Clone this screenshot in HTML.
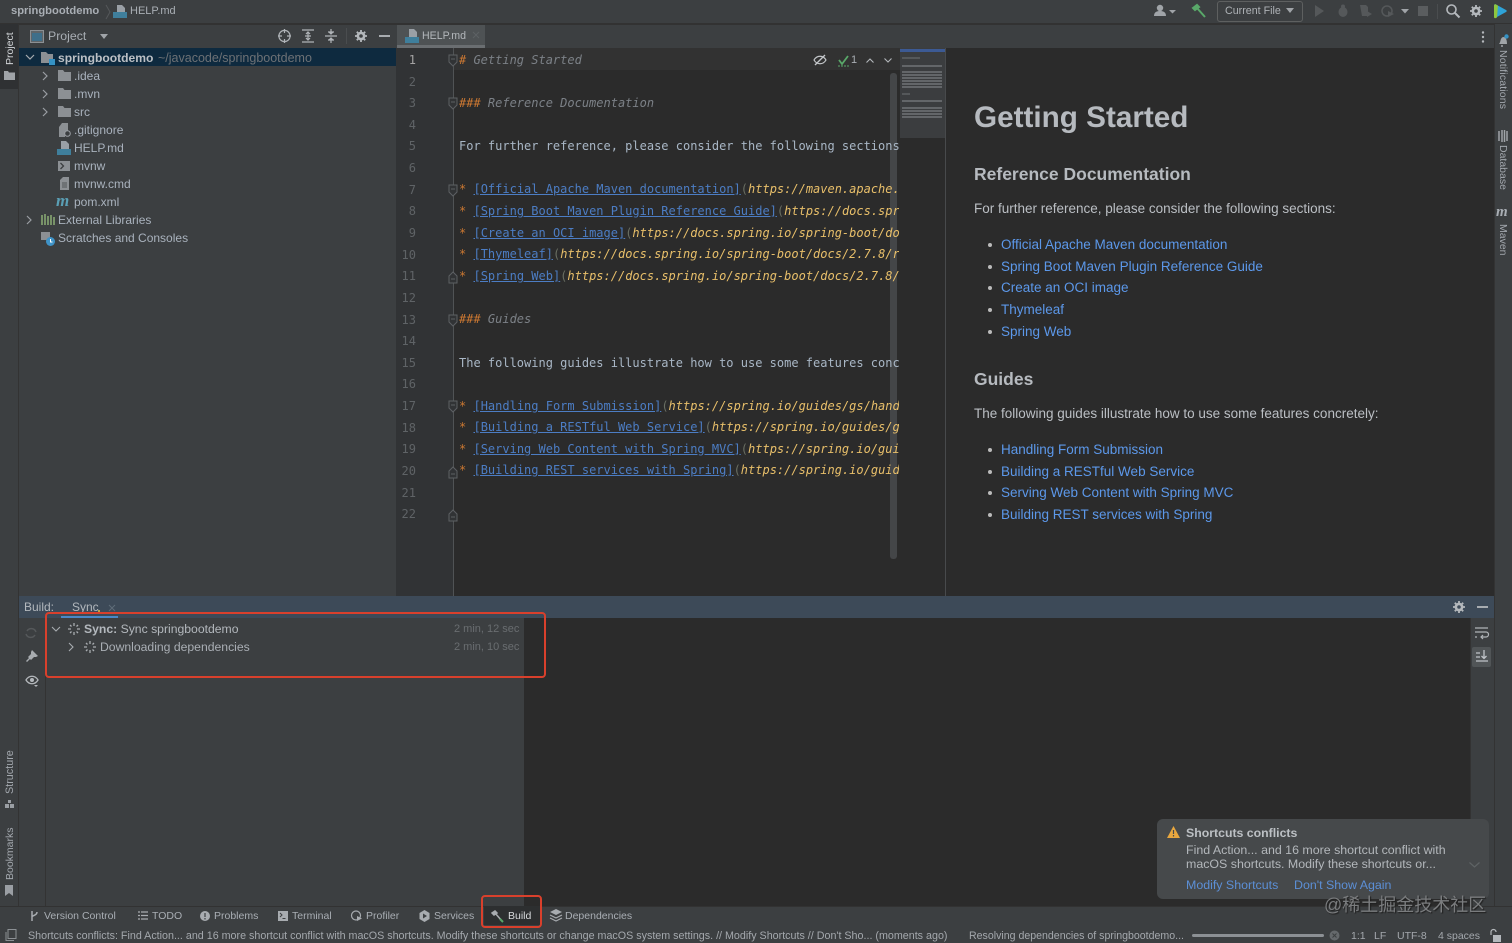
<!DOCTYPE html>
<html><head><meta charset="utf-8"><title>HELP.md</title>
<style>
html,body{margin:0;padding:0;background:#3c3f41}
#r{position:relative;width:1512px;height:943px;overflow:hidden;background:#3c3f41;font-family:"Liberation Sans","Noto Sans CJK SC",sans-serif;color:#a9b2bd;font-size:12px;filter:blur(.35px)}
.a,.t,.m,.p,.n{position:absolute;white-space:nowrap}
.t{line-height:16px}
.m{font-family:"DejaVu Sans Mono","Liberation Mono",monospace;font-size:12px;line-height:16px;color:#a9b7c6;left:459px}
.n{font-family:"DejaVu Sans Mono","Liberation Mono",monospace;font-size:12px;line-height:16px;color:#5f6366;left:398px;width:18px;text-align:right}
.h{color:#cc7832;font-style:italic}.g{color:#7c8187;font-style:italic}.o{color:#cc7832}
.l{color:#4c7dc4;text-decoration:underline}.u{color:#e8bf6a;font-style:italic}.b{color:#6a6f63}
.p{font-size:13.5px;line-height:18px;color:#bbbfc4}
.lk{color:#5c98ea}
.d{width:4px;height:4px;border-radius:50%;background:#bbb;position:absolute;left:988px}
.v{position:absolute;transform-origin:0 0;transform:rotate(-90deg);white-space:nowrap;font-size:10.5px;line-height:14px;color:#a3a8ae}
.v2{position:absolute;transform-origin:0 0;transform:rotate(90deg);white-space:nowrap;font-size:10.5px;line-height:14px;color:#a3a8ae}
svg{position:absolute;overflow:visible}
.mini{position:absolute;left:902px;height:2px;background:#636669}
.tr{font-size:12px}
</style></head><body><div id="r">

<!-- top bar -->
<div class="a" style="left:0;top:0;width:1512px;height:23px;background:#3c3f41;border-bottom:1px solid #323232"></div>
<div class="t" style="left:11px;top:3px;font-weight:bold;font-size:11.2px;color:#a9aeb4">springbootdemo</div>
<svg style="left:105px;top:4px" width="6" height="16"><path d="M1 1l4 7-4 7" fill="none" stroke="#55585a"/></svg>
<svg style="left:113px;top:4px" width="14" height="14"><path d="M4 1h5l3 3v4H4z" fill="#9aa0a6"/><rect x="0" y="8" width="14" height="6" fill="#3f7f9c"/></svg>
<div class="t" style="left:130px;top:3px;font-size:11px;color:#a9aeb4">HELP.md</div>

<svg style="left:1154px;top:4px" width="24" height="14"><circle cx="6" cy="4" r="3.200" fill="#a0a4a8"/><path d="M0 12c0-4 3-5 6-5s6 1 6 5z" fill="#a0a4a8"/><path d="M15 6h7l-3.500 3.500z" fill="#a0a4a8"/></svg>
<svg style="left:1191px;top:3px" width="16" height="16"><path d="M2 5l4-3 2 2-4 3zM6 5l8 9" fill="#59a869" stroke="#59a869" stroke-width="2"/></svg>
<div class="a" style="left:1217px;top:1px;width:84px;height:19px;border:1px solid #5e6060;border-radius:3px"></div>
<div class="t" style="left:1225px;top:3px;font-size:10.7px;color:#aeb2b6">Current File</div>
<svg style="left:1286px;top:8px" width="9" height="6"><path d="M0 0h8l-4 5z" fill="#a0a4a8"/></svg>
<svg style="left:1315px;top:5px" width="10" height="12"><path d="M0 0l9 6-9 6z" fill="#55585a"/></svg>
<svg style="left:1337px;top:4px" width="12" height="14"><ellipse cx="6" cy="8" rx="4.500" ry="5" fill="#55585a"/><circle cx="6" cy="2.500" r="2" fill="#55585a"/></svg>
<svg style="left:1360px;top:4px" width="13" height="14"><path d="M0 1h6l2 2v9H2z" fill="#55585a"/><path d="M7 7l5 3-5 3z" fill="#55585a"/></svg>
<svg style="left:1381px;top:4px" width="14" height="14"><circle cx="6" cy="7" r="5" fill="none" stroke="#55585a" stroke-width="1.500"/><path d="M7 7l6 3-6 3z" fill="#55585a"/></svg>
<svg style="left:1401px;top:9px" width="8" height="5"><path d="M0 0h8l-4 4.500z" fill="#a0a4a8"/></svg>
<div class="a" style="left:1418px;top:6px;width:10px;height:10px;background:#5a5d5f"></div>
<div class="a" style="left:1437px;top:4px;width:1px;height:15px;background:#4a4d4f"></div>
<svg style="left:1446px;top:4px" width="14" height="14"><circle cx="5.500" cy="5.500" r="4.500" fill="none" stroke="#b4b8bc" stroke-width="1.600"/><path d="M9 9l4.500 4.500" stroke="#b4b8bc" stroke-width="2"/></svg>
<svg style="left:1470px;top:5px" width="12" height="12" viewBox="0 0 12 12"><circle cx="6" cy="6" r="3.300" fill="none" stroke="#b4b8bc" stroke-width="2.200"/><path d="M6 0v12M0 6h12M1.800 1.800l8.400 8.400M10.200 1.800l-8.400 8.400" stroke="#b4b8bc" stroke-width="1.800"/><circle cx="6" cy="6" r="1.800" fill="#3c3f41"/></svg>
<svg style="left:1493px;top:4px" width="14" height="14"><path d="M1 1.500c0-1 1-1.500 2-1l10 5.500c1 .6 1 1.400 0 2l-10 5.500c-1 .5-2 0-2-1z" fill="#2ea3d8"/><path d="M1 1.500c0-1 1-1.500 2-1l2 1.100-1 11.800-1 .6c-1 .5-2 0-2-1z" fill="#8ec63f"/></svg>

<!-- left stripe -->
<div class="a" style="left:0;top:24px;width:18px;height:882px;background:#3c3f41;border-right:1px solid #333"></div>
<div class="a" style="left:0;top:24px;width:18px;height:65px;background:#2f3133"></div>
<div class="v" style="left:3px;top:65px;color:#d2d5d8">Project</div>
<svg style="left:4px;top:71px" width="11" height="9"><path d="M0 0h4l1 1.500h6V9H0z" fill="#a0a4a8"/></svg>
<div class="v" style="left:3px;top:794px;font-size:10.8px">Structure</div>
<svg style="left:5px;top:800px" width="9" height="8"><path d="M3 0h3v3H3zM0 4h4v4H0zM5 4h4v4H5z" fill="#9a9ea3"/></svg>
<div class="v" style="left:3px;top:880px">Bookmarks</div>
<svg style="left:5px;top:885px" width="8" height="11"><path d="M0 0h8v11l-4-3-4 3z" fill="#9a9ea3"/></svg>

<!-- project panel -->
<div class="a" style="left:19px;top:24px;width:377px;height:24px;background:#3c3f41;border-top:1px solid #323232;box-sizing:border-box"></div>
<svg style="left:30px;top:30px" width="14" height="13"><rect x=".5" y=".5" width="13" height="12" fill="#5f6569" stroke="#8c9094"/><rect x="2" y="3" width="10" height="8" fill="#3f6f8a"/></svg>
<div class="t" style="left:48px;top:28px;font-size:12.3px;color:#a9aeb4">Project</div>
<svg style="left:100px;top:34px" width="9" height="6"><path d="M0 0h8l-4 5z" fill="#a0a4a8"/></svg>
<svg style="left:278px;top:29px" width="14" height="14"><circle cx="6.500" cy="7" r="5.600" fill="none" stroke="#b0b4b8" stroke-width="1.200"/><path d="M6.500 0v4M6.500 10v4M0 7h4M9 7h4" stroke="#b0b4b8" stroke-width="1.200"/></svg>
<svg style="left:302px;top:29px" width="12" height="14"><path d="M0 1h12M0 13h12M3 7h6M6 3v8M4 5l2-2 2 2M4 9l2 2 2-2" fill="none" stroke="#b0b4b8" stroke-width="1.200"/></svg>
<svg style="left:325px;top:29px" width="12" height="14"><path d="M0 7h12M3 3h6M3 11h6M6 0v5M6 9v5M4 3l2 2 2-2M4 11l2-2 2 2" fill="none" stroke="#b0b4b8" stroke-width="1.200"/></svg>
<div class="a" style="left:346px;top:28px;width:1px;height:16px;background:#4a4d4f"></div>
<svg style="left:355px;top:30px" width="12" height="12" viewBox="0 0 12 12"><circle cx="6" cy="6" r="3.300" fill="none" stroke="#b4b8bc" stroke-width="2.200"/><path d="M6 0v12M0 6h12M1.800 1.800l8.400 8.400M10.200 1.800l-8.400 8.400" stroke="#b4b8bc" stroke-width="1.800"/><circle cx="6" cy="6" r="1.800" fill="#3c3f41"/></svg>
<div class="a" style="left:379px;top:35px;width:11px;height:2px;background:#a8acb0"></div>

<div class="a" style="left:19px;top:48px;width:377px;height:18px;background:#0e2a3f"></div>
<svg style="left:25px;top:54px" width="10" height="7"><path d="M1 1l4 4 4-4" fill="none" stroke="#a8acb0" stroke-width="1.200"/></svg>
<svg style="left:41px;top:51px" width="14" height="14"><path d="M0 1h5l2 2h5v9H0z" fill="#8c9094"/><rect x="8" y="8" width="6" height="6" fill="#3592c4"/></svg>
<div class="t" style="left:58px;top:50px;font-size:12.1px;color:#bcc0c5;font-weight:bold">springbootdemo</div>
<div class="t" style="left:158px;top:50px;font-size:12.5px;color:#6d7175">~/javacode/springbootdemo</div>

<svg style="left:42px;top:71px" width="6" height="10"><path d="M1 1l4 4-4 4" fill="none" stroke="#9a9ea3" stroke-width="1.200"/></svg>
<svg style="left:58px;top:70px" width="13" height="11"><path d="M0 0h5l1.500 2H13v9H0z" fill="#8c9094"/></svg>
<div class="t tr" style="left:74px;top:68px">.idea</div>
<svg style="left:42px;top:89px" width="6" height="10"><path d="M1 1l4 4-4 4" fill="none" stroke="#9a9ea3" stroke-width="1.200"/></svg>
<svg style="left:58px;top:88px" width="13" height="11"><path d="M0 0h5l1.500 2H13v9H0z" fill="#8c9094"/></svg>
<div class="t tr" style="left:74px;top:86px">.mvn</div>
<svg style="left:42px;top:107px" width="6" height="10"><path d="M1 1l4 4-4 4" fill="none" stroke="#9a9ea3" stroke-width="1.200"/></svg>
<svg style="left:58px;top:106px" width="13" height="11"><path d="M0 0h5l1.500 2H13v9H0z" fill="#8c9094"/></svg>
<div class="t tr" style="left:74px;top:104px">src</div>
<svg style="left:59px;top:123px" width="12" height="14"><path d="M3 0h6v8H6v6H0V4z" fill="#8c9094"/><circle cx="8.500" cy="10.500" r="2.800" fill="none" stroke="#9a9ea3"/></svg>
<div class="t tr" style="left:74px;top:122px">.gitignore</div>
<svg style="left:57px;top:141px" width="14" height="14"><path d="M4 0h5l3 3v5H4z" fill="#9aa0a6"/><rect x="0" y="8" width="14" height="6" fill="#3f7f9c"/></svg>
<div class="t tr" style="left:74px;top:140px">HELP.md</div>
<svg style="left:58px;top:161px" width="12" height="10"><rect width="12" height="10" fill="#8c9094"/><path d="M2.500 2l3 3-3 3" fill="none" stroke="#3c3f41" stroke-width="1.300"/></svg>
<div class="t tr" style="left:74px;top:158px">mvnw</div>
<svg style="left:60px;top:177px" width="9" height="13"><path d="M3 0h6v13H0V3z" fill="#8c9094"/><path d="M2 6h5M2 8h5M2 10h5" stroke="#3c3f41" stroke-width=".8"/></svg>
<div class="t tr" style="left:74px;top:176px">mvnw.cmd</div>
<div class="t" style="left:56px;top:193px;font-size:17px;font-weight:bold;font-style:italic;color:#5a9fb5;font-family:'Liberation Serif',serif">m</div>
<div class="t tr" style="left:74px;top:194px">pom.xml</div>
<svg style="left:26px;top:215px" width="6" height="10"><path d="M1 1l4 4-4 4" fill="none" stroke="#9a9ea3" stroke-width="1.200"/></svg>
<svg style="left:41px;top:214px" width="14" height="11"><path d="M1 1v10M4 0v11M7 2v9M10 1v10M13 3v8" stroke="#7f9b6d" stroke-width="1.800"/></svg>
<div class="t tr" style="left:58px;top:212px">External Libraries</div>
<svg style="left:41px;top:232px" width="14" height="14"><rect width="9" height="8" fill="#8c9094"/><circle cx="9.500" cy="9.500" r="4.500" fill="#3f93c7"/><path d="M9.500 7v3h2" stroke="#fff" fill="none"/></svg>
<div class="t tr" style="left:58px;top:230px">Scratches and Consoles</div>

<!-- tabs -->
<div class="a" style="left:396px;top:24px;width:1098px;height:24px;background:#3c3f41;border-top:1px solid #323232;box-sizing:border-box"></div>
<div class="a" style="left:397px;top:25px;width:88px;height:20px;background:#4e5254"></div>
<div class="a" style="left:397px;top:45px;width:88px;height:3px;background:#6a6e71"></div>
<svg style="left:405px;top:29px" width="14" height="14"><path d="M4 0h5l3 3v5H4z" fill="#9aa0a6"/><rect x="0" y="8" width="14" height="6" fill="#3f7f9c"/></svg>
<div class="t" style="left:422px;top:28px;font-size:10.6px;color:#b3b7bb">HELP.md</div>
<svg style="left:472px;top:31px" width="8" height="8"><path d="M1 1l6 6M7 1l-6 6" stroke="#5d6164" stroke-width="1"/></svg>
<svg style="left:1481px;top:31px" width="4" height="12"><circle cx="2" cy="1.500" r="1.200" fill="#b4b8bc"/><circle cx="2" cy="6" r="1.200" fill="#b4b8bc"/><circle cx="2" cy="10.500" r="1.200" fill="#b4b8bc"/></svg>

<!-- editor -->
<div class="a" style="left:396px;top:48px;width:549px;height:548px;background:#2b2b2b"></div>
<div class="a" style="left:396px;top:48px;width:57px;height:548px;background:#313335;border-right:1px solid #505355"></div>
<div class="a" style="left:454px;top:48px;width:446px;height:22px;background:#323232"></div>
<div class="a" style="left:890px;top:73px;width:7px;height:486px;background:#444648;border-radius:3px"></div>

<div class="n" style="top:52px;color:#a4a3a3">1</div><div class="n" style="top:74px">2</div><div class="n" style="top:95px">3</div><div class="n" style="top:117px">4</div><div class="n" style="top:138px">5</div><div class="n" style="top:160px">6</div><div class="n" style="top:182px">7</div><div class="n" style="top:203px">8</div><div class="n" style="top:225px">9</div><div class="n" style="top:247px">10</div><div class="n" style="top:268px">11</div><div class="n" style="top:290px">12</div><div class="n" style="top:312px">13</div><div class="n" style="top:333px">14</div><div class="n" style="top:355px">15</div><div class="n" style="top:376px">16</div><div class="n" style="top:398px">17</div><div class="n" style="top:420px">18</div><div class="n" style="top:441px">19</div><div class="n" style="top:463px">20</div><div class="n" style="top:485px">21</div><div class="n" style="top:506px">22</div>

<svg style="left:448px;top:48px" width="10" height="480" fill="#313335" stroke="#5d6063">
<path d="M1 7h8v7l-4 4-4-4zM3 11h4"/><path d="M1 50h8v7l-4 4-4-4zM3 54h4"/><path d="M1 137h8v7l-4 4-4-4zM3 141h4"/><path d="M1 228l4-4 4 4v7H1zM3 231h4"/><path d="M1 267h8v7l-4 4-4-4zM3 271h4"/><path d="M1 353h8v7l-4 4-4-4zM3 357h4"/><path d="M1 423l4-4 4 4v7H1zM3 426h4"/><path d="M1 466l4-4 4 4v7H1zM3 469h4"/></svg>

<div class="a" style="left:459px;top:48px;width:440px;height:548px;overflow:hidden">
<div class="m" style="left:0;top:4px"><span class="h"># </span><span class="g">Getting Started</span></div>
<div class="m" style="left:0;top:47px"><span class="h">### </span><span class="g">Reference Documentation</span></div>
<div class="m" style="left:0;top:90px">For further reference, please consider the following sections:</div>
<div class="m" style="left:0;top:133px"><span class="o">*</span> <span class="l">[Official Apache Maven documentation]</span><span class="b">(</span><span class="u">https://maven.apache.org/guides/index.html</span></div>
<div class="m" style="left:0;top:155px"><span class="o">*</span> <span class="l">[Spring Boot Maven Plugin Reference Guide]</span><span class="b">(</span><span class="u">https://docs.spring.io/spring-boot</span></div>
<div class="m" style="left:0;top:177px"><span class="o">*</span> <span class="l">[Create an OCI image]</span><span class="b">(</span><span class="u">https://docs.spring.io/spring-boot/docs/2.7.8</span></div>
<div class="m" style="left:0;top:198px"><span class="o">*</span> <span class="l">[Thymeleaf]</span><span class="b">(</span><span class="u">https://docs.spring.io/spring-boot/docs/2.7.8/reference</span></div>
<div class="m" style="left:0;top:220px"><span class="o">*</span> <span class="l">[Spring Web]</span><span class="b">(</span><span class="u">https://docs.spring.io/spring-boot/docs/2.7.8/reference</span></div>
<div class="m" style="left:0;top:263px"><span class="h">### </span><span class="g">Guides</span></div>
<div class="m" style="left:0;top:307px">The following guides illustrate how to use some features concretely:</div>
<div class="m" style="left:0;top:350px"><span class="o">*</span> <span class="l">[Handling Form Submission]</span><span class="b">(</span><span class="u">https://spring.io/guides/gs/handling-form</span></div>
<div class="m" style="left:0;top:371px"><span class="o">*</span> <span class="l">[Building a RESTful Web Service]</span><span class="b">(</span><span class="u">https://spring.io/guides/gs/rest</span></div>
<div class="m" style="left:0;top:393px"><span class="o">*</span> <span class="l">[Serving Web Content with Spring MVC]</span><span class="b">(</span><span class="u">https://spring.io/guides/gs</span></div>
<div class="m" style="left:0;top:414px"><span class="o">*</span> <span class="l">[Building REST services with Spring]</span><span class="b">(</span><span class="u">https://spring.io/guides/tut</span></div>
</div>

<svg style="left:813px;top:54px" width="14" height="12"><path d="M1 6c3-5 9-5 12 0-3 5-9 5-12 0z" fill="none" stroke="#c4c7ca" stroke-width="1.200"/><path d="M2 11L12 1" stroke="#c4c7ca" stroke-width="1.300"/></svg>
<svg style="left:838px;top:55px" width="12" height="12"><path d="M1 5l3 4 6-8" fill="none" stroke="#59a869" stroke-width="1.800"/><path d="M0 11h11" stroke="#59a869" stroke-dasharray="2 1"/></svg>
<div class="t" style="left:851px;top:52px;font-size:11px;color:#a9aeb4">1</div>
<svg style="left:866px;top:58px" width="8" height="5"><path d="M.5 4.500L4 1l3.500 3.500" fill="none" stroke="#b4b8bc" stroke-width="1.100"/></svg>
<svg style="left:884px;top:58px" width="8" height="5"><path d="M.5.500L4 4 7.500.500" fill="none" stroke="#b4b8bc" stroke-width="1.100"/></svg>

<!-- minimap -->
<div class="a" style="left:900px;top:48px;width:45px;height:90px;background:#3b3d3f"></div>
<div class="a" style="left:900px;top:49px;width:45px;height:3px;background:#3c5a94"></div>
<div class="mini" style="top:57px;width:18px;background:#55585a"></div>
<div class="mini" style="top:65px;width:40px"></div>
<div class="mini" style="top:71px;width:40px"></div><div class="mini" style="top:74px;width:40px"></div><div class="mini" style="top:77px;width:40px"></div><div class="mini" style="top:80px;width:40px"></div><div class="mini" style="top:83px;width:40px"></div><div class="mini" style="top:86px;width:40px"></div>
<div class="mini" style="top:93px;width:8px;background:#55585a"></div>
<div class="mini" style="top:100px;width:40px"></div>
<div class="mini" style="top:107px;width:40px"></div><div class="mini" style="top:110px;width:40px"></div><div class="mini" style="top:113px;width:40px"></div><div class="mini" style="top:116px;width:40px"></div>
<div class="a" style="left:945px;top:48px;width:1px;height:548px;background:#484a4c"></div>

<!-- preview -->
<div class="a" style="left:946px;top:48px;width:548px;height:548px;background:#2b2b2b"></div>
<div class="p" style="left:974px;top:100px;font-size:29.7px;line-height:36px;font-weight:bold;color:#b6babf">Getting Started</div>
<div class="p" style="left:974px;top:163px;font-size:17.5px;line-height:22px;font-weight:bold;color:#b6babf">Reference Documentation</div>
<div class="p" style="left:974px;top:200px">For further reference, please consider the following sections:</div>
<div class="d" style="top:243px"></div><div class="p lk" style="left:1001px;top:236px">Official Apache Maven documentation</div>
<div class="d" style="top:265px"></div><div class="p lk" style="left:1001px;top:258px">Spring Boot Maven Plugin Reference Guide</div>
<div class="d" style="top:286px"></div><div class="p lk" style="left:1001px;top:279px">Create an OCI image</div>
<div class="d" style="top:308px"></div><div class="p lk" style="left:1001px;top:301px">Thymeleaf</div>
<div class="d" style="top:330px"></div><div class="p lk" style="left:1001px;top:323px">Spring Web</div>
<div class="p" style="left:974px;top:368px;font-size:17.5px;line-height:22px;font-weight:bold;color:#b6babf">Guides</div>
<div class="p" style="left:974px;top:405px">The following guides illustrate how to use some features concretely:</div>
<div class="d" style="top:448px"></div><div class="p lk" style="left:1001px;top:441px">Handling Form Submission</div>
<div class="d" style="top:470px"></div><div class="p lk" style="left:1001px;top:463px">Building a RESTful Web Service</div>
<div class="d" style="top:491px"></div><div class="p lk" style="left:1001px;top:484px">Serving Web Content with Spring MVC</div>
<div class="d" style="top:513px"></div><div class="p lk" style="left:1001px;top:506px">Building REST services with Spring</div>

<!-- right stripe -->
<div class="a" style="left:1494px;top:24px;width:18px;height:882px;background:#3c3f41;border-left:1px solid #333;box-sizing:border-box"></div>
<svg style="left:1498px;top:34px" width="12" height="13"><path d="M1 10c2-2 1-6 4-7 3 0 4 3 4 7z" fill="#a0a4a8"/><circle cx="8.500" cy="2.500" r="2.200" fill="#3592c4"/><circle cx="4" cy="12" r="1" fill="#a0a4a8"/></svg>
<div class="v2" style="left:1510px;top:50px;letter-spacing:.15px">Notifications</div>
<svg style="left:1498px;top:130px" width="10" height="12"><path d="M1 1v10M4 0v12M6.500 0v12M9 1v10" stroke="#a0a4a8" stroke-width="1.500"/></svg>
<div class="v2" style="left:1510px;top:145px">Database</div>
<div class="t" style="left:1496px;top:204px;font-size:15px;font-weight:bold;font-style:italic;color:#a9aeb4;font-family:'Liberation Serif',serif">m</div>
<div class="v2" style="left:1510px;top:224px">Maven</div>

<!-- build panel -->
<div class="a" style="left:19px;top:596px;width:1475px;height:22px;background:#3d4a58"></div>
<div class="t" style="left:24px;top:599px;font-size:12px;color:#b3b8bd">Build:</div>
<div class="t" style="left:72px;top:599px;font-size:12px;color:#b3b8bd">Sync</div>
<div class="a" style="left:98px;top:610px;width:2px;height:2px;background:#b9a64b"></div>
<svg style="left:108px;top:604px" width="8" height="8"><path d="M1 1l6 6M7 1l-6 6" stroke="#5f6c78"/></svg>
<div class="a" style="left:61px;top:616px;width:57px;height:3px;background:#4a88c7"></div>
<svg style="left:1453px;top:601px" width="12" height="12" viewBox="0 0 12 12"><circle cx="6" cy="6" r="3.300" fill="none" stroke="#b4b8bc" stroke-width="2.200"/><path d="M6 0v12M0 6h12M1.800 1.800l8.400 8.400M10.200 1.800l-8.400 8.400" stroke="#b4b8bc" stroke-width="1.800"/><circle cx="6" cy="6" r="1.800" fill="#3d4a58"/></svg>
<div class="a" style="left:1477px;top:606px;width:11px;height:2px;background:#a8acb0"></div>

<div class="a" style="left:19px;top:618px;width:26px;height:288px;background:#3c3f41;border-right:1px solid #333"></div>
<div class="a" style="left:46px;top:618px;width:478px;height:288px;background:#3c3f41"></div>
<div class="a" style="left:524px;top:618px;width:946px;height:288px;background:#2b2b2b"></div>
<div class="a" style="left:1470px;top:618px;width:24px;height:288px;background:#3c3f41;border-left:1px solid #333;box-sizing:border-box"></div>

<svg style="left:25px;top:627px" width="12" height="12"><path d="M2 4a5 5 0 0 1 9 1M10 8a5 5 0 0 1-9-1" fill="none" stroke="#55585a" stroke-width="1.500"/></svg>
<svg style="left:25px;top:650px" width="13" height="13"><path d="M7 0l6 6-2 1-2 0-3 3-1-1-3 3-1-1 3-3-1-1 3-3 0-2z" fill="#a8acb0"/></svg>
<svg style="left:25px;top:675px" width="14" height="12"><path d="M1 5c3-5 9-5 12 0-3 5-9 5-12 0z" fill="none" stroke="#b4b8bc" stroke-width="1.300"/><circle cx="7" cy="5" r="2" fill="#b4b8bc"/><path d="M9 10h4l-2 2z" fill="#b4b8bc"/></svg>

<svg style="left:51px;top:626px" width="10" height="7"><path d="M1 1l4 4 4-4" fill="none" stroke="#a8acb0" stroke-width="1.100"/></svg>
<svg style="left:68px;top:623px" width="12" height="12" stroke="#a8acb0" stroke-width="1.300"><path d="M6 0v3M10 2L8.500 3.500M12 6H9M10 10L8.500 8.500M6 12V9M2 10l1.500-1.500M0 6h3M2 2l1.500 1.500"/></svg>
<div class="t" style="left:84px;top:621px;font-size:12.2px;color:#b3b8bd"><b>Sync:</b> Sync springbootdemo</div>
<div class="t" style="left:454px;top:621px;font-size:11px;color:#696d70">2 min, 12 sec</div>
<svg style="left:68px;top:642px" width="6" height="10"><path d="M1 1l4 4-4 4" fill="none" stroke="#a8acb0" stroke-width="1.100"/></svg>
<svg style="left:84px;top:641px" width="12" height="12" stroke="#a8acb0" stroke-width="1.300"><path d="M6 0v3M10 2L8.500 3.500M12 6H9M10 10L8.500 8.500M6 12V9M2 10l1.500-1.500M0 6h3M2 2l1.500 1.500"/></svg>
<div class="t" style="left:100px;top:639px;font-size:12.2px;color:#a9aeb4">Downloading dependencies</div>
<div class="t" style="left:454px;top:639px;font-size:11px;color:#696d70">2 min, 10 sec</div>

<svg style="left:1475px;top:627px" width="13" height="13"><path d="M0 1h13M0 5h11a2.500 2.500 0 0 1 0 5H6M0 10h2M8 8l-2 2 2 2" fill="none" stroke="#b0b4b8" stroke-width="1.200"/></svg>
<div class="a" style="left:1472px;top:647px;width:19px;height:20px;background:#515557;border-radius:2px"></div>
<svg style="left:1476px;top:650px" width="12" height="13"><path d="M0 3h4M0 7h4M0 11h12M8 0v8M5.500 6L8 8.500 10.500 6" fill="none" stroke="#c0c4c8" stroke-width="1.300"/></svg>

<!-- red box -->
<div class="a" style="left:45px;top:612px;width:501px;height:66px;box-sizing:border-box;border:2px solid #d9402c;border-radius:4px"></div>

<!-- notification -->
<div class="a" style="left:1157px;top:819px;width:332px;height:80px;background:#46494b;border-radius:6px"></div>
<svg style="left:1167px;top:826px" width="13" height="12"><path d="M6.500 0l6.500 12H0z" fill="#e8a73f"/><path d="M6.500 4v4M6.500 9v1.500" stroke="#46494b" stroke-width="1.200"/></svg>
<div class="t" style="left:1186px;top:825px;font-size:12.3px;font-weight:bold;color:#bcc0c4">Shortcuts conflicts</div>
<div class="t" style="left:1186px;top:842px;font-size:12.4px;color:#b3b7bb">Find Action... and 16 more shortcut conflict with</div>
<div class="t" style="left:1186px;top:856px;font-size:12.4px;color:#b3b7bb">macOS shortcuts. Modify these shortcuts or...</div>
<svg style="left:1469px;top:862px" width="11" height="6"><path d="M.5.500l5 4.500 5-4.500" fill="none" stroke="#5f6365" stroke-width="1.200"/></svg>
<div class="t" style="left:1186px;top:877px;font-size:12.4px;color:#5c8fd6">Modify Shortcuts</div>
<div class="t" style="left:1294px;top:877px;font-size:12.4px;color:#5c8fd6">Don't Show Again</div>

<!-- tool strip -->
<div class="a" style="left:0;top:906px;width:1512px;height:20px;background:#3c3f41;border-top:1px solid #323232;box-sizing:border-box"></div>
<svg style="left:30px;top:910px" width="9" height="12"><path d="M2 1v10M2 7c0-2 5-1 5-5" fill="none" stroke="#a8acb0" stroke-width="1.500"/></svg>
<div class="t" style="left:44px;top:908px;font-size:10.5px;color:#a9aeb4">Version Control</div>
<svg style="left:138px;top:911px" width="10" height="9"><path d="M0 1h2M3 1h7M0 4.500h2M3 4.500h7M0 8h2M3 8h7" stroke="#a8acb0" stroke-width="1.200"/></svg>
<div class="t" style="left:152px;top:908px;font-size:10.5px;color:#a9aeb4">TODO</div>
<svg style="left:200px;top:911px" width="10" height="10"><circle cx="5" cy="5" r="5" fill="#a8acb0"/><path d="M5 2v4M5 7v1.500" stroke="#3c3f41" stroke-width="1.200"/></svg>
<div class="t" style="left:214px;top:908px;font-size:10.5px;color:#a9aeb4">Problems</div>
<svg style="left:278px;top:911px" width="10" height="10"><rect width="10" height="10" fill="#a8acb0"/><path d="M2 2l2 2-2 2M4.500 7.500h3" fill="none" stroke="#3c3f41"/></svg>
<div class="t" style="left:292px;top:908px;font-size:10.5px;color:#a9aeb4">Terminal</div>
<svg style="left:351px;top:910px" width="12" height="12"><circle cx="5" cy="5.500" r="4.500" fill="none" stroke="#a8acb0" stroke-width="1.200"/><path d="M6 6l5 2.500L6 11z" fill="#a8acb0"/></svg>
<div class="t" style="left:366px;top:908px;font-size:10.5px;color:#a9aeb4">Profiler</div>
<svg style="left:419px;top:910px" width="11" height="12"><path d="M5.500 0l5 3v6l-5 3-5-3V3z" fill="#a8acb0"/><path d="M4 3.500l4 2.500-4 2.500z" fill="#3c3f41"/></svg>
<div class="t" style="left:434px;top:908px;font-size:10.5px;color:#a9aeb4">Services</div>
<div class="a" style="left:484px;top:906px;width:56px;height:19px;background:#2d2f30"></div>
<svg style="left:492px;top:910px" width="12" height="13"><path d="M0 3l3-2 2 2-3 2zM3 3l7 8" fill="#a8acb0" stroke="#a8acb0" stroke-width="1.500"/><path d="M8 9l3 3" stroke="#59a869" stroke-width="2"/></svg>
<div class="t" style="left:508px;top:908px;font-size:10.5px;color:#d8dadc">Build</div>
<svg style="left:550px;top:909px" width="12" height="13"><path d="M6 0l6 3-6 3-6-3z" fill="#a8acb0"/><path d="M0 6l6 3 6-3M0 9l6 3 6-3" fill="none" stroke="#a8acb0" stroke-width="1.200"/></svg>
<div class="t" style="left:565px;top:908px;font-size:10.5px;color:#a9aeb4">Dependencies</div>

<!-- status bar -->
<div class="a" style="left:0;top:926px;width:1512px;height:17px;background:#3c3f41"></div>
<svg style="left:5px;top:929px" width="12" height="12"><path d="M3 .5h8v9H3zM1 3v8.500h8" fill="none" stroke="#8c9094"/></svg>
<div class="t" style="left:28px;top:928px;font-size:10.72px;color:#a4a8ad">Shortcuts conflicts: Find Action... and 16 more shortcut conflict with macOS shortcuts. Modify these shortcuts or change macOS system settings. // Modify Shortcuts // Don't Sho... (moments ago)</div>
<div class="t" style="left:969px;top:928px;font-size:10.6px;color:#a4a8ad">Resolving dependencies of springbootdemo...</div>
<div class="a" style="left:1192px;top:934px;width:132px;height:3px;background:#8c9094;border-radius:2px"></div>
<svg style="left:1329px;top:930px" width="11" height="11"><circle cx="5.500" cy="5.500" r="5" fill="#65696c"/><path d="M3.500 3.500l4 4M7.500 3.500l-4 4" stroke="#3c3f41"/></svg>
<div class="t" style="left:1351px;top:928px;font-size:10.5px;color:#a4a8ad">1:1</div>
<div class="t" style="left:1374px;top:928px;font-size:10.5px;color:#a4a8ad">LF</div>
<div class="t" style="left:1397px;top:928px;font-size:10.5px;color:#a4a8ad">UTF-8</div>
<div class="t" style="left:1438px;top:928px;font-size:10.5px;color:#a4a8ad">4 spaces</div>
<svg style="left:1490px;top:929px" width="12" height="13"><rect x="3" y="6" width="8" height="7" fill="#b4b8bc"/><path d="M1 6V3a2.500 2.500 0 0 1 5 0" fill="none" stroke="#b4b8bc" stroke-width="1.200"/></svg>

<!-- build red box -->
<div class="a" style="left:481px;top:895px;width:61px;height:33px;box-sizing:border-box;border:2px solid #d9402c;border-radius:4px"></div>

<!-- watermark -->
<div class="t" style="left:1324px;top:893px;font-size:18px;line-height:24px;color:#7a7c7e;text-shadow:1px 1px 1px #1f1f1f;font-family:'Liberation Sans','Noto Sans CJK SC',sans-serif">@稀土掘金技术社区</div>

</div></body></html>
